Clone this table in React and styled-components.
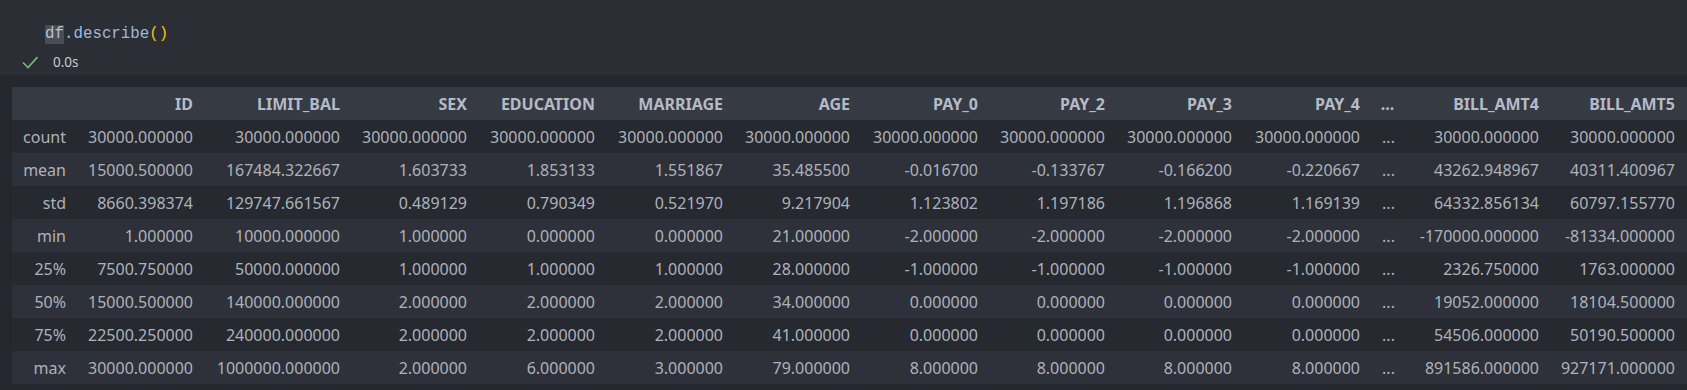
import React from "react";
import styled, { createGlobalStyle } from "styled-components";

const GlobalStyle = createGlobalStyle`
  html, body { margin: 0; padding: 0; background: #24272e; overflow: hidden; }
  body { font-family: "Noto Sans", "Open Sans", sans-serif; }
`;

const Page = styled.div`
  width: 1687px;
  height: 390px;
  background: #24272e;
  overflow: hidden;
`;

const InputCell = styled.div`
  height: 75px;
  background: #2b2e35;
  box-sizing: border-box;
  padding-top: 25px;
`;

const CodeLine = styled.div`
  padding-left: 45px;
  height: 19px;
  display: flex;
  align-items: center;
  font-family: "Liberation Mono", "DejaVu Sans Mono", monospace;
  font-size: 15.8px;
  white-space: pre;
`;

const Tok = styled.span`
  color: ${(p) => p.$c};
  background: ${(p) => p.$bg || "transparent"};
  line-height: 19px;
`;

const Status = styled.div`
  display: flex;
  align-items: center;
  height: 16px;
  margin-top: 10px;
  padding-left: 22px;
  gap: 15px;
  font-family: "Noto Sans", "Open Sans", sans-serif;
  font-size: 13.5px;
  color: #c8cbd1;
`;

const Output = styled.div`
  padding: 12px 0 0 12px;
  overflow: hidden;
`;

const Table = styled.table`
  border-collapse: collapse;
  table-layout: fixed;
  width: 1675px;
  font-family: "Noto Sans", "Open Sans", sans-serif;
  font-size: 16px;
`;

const HeadRow = styled.tr`
  background: #363a43;
  height: 33px;
`;

const Row = styled.tr`
  background: ${(p) => (p.$alt ? "#2e3139" : "#262930")};
  height: 33px;
`;

const Th = styled.th`
  padding: 0;
  padding-right: ${(p) => (p.$pr != null ? p.$pr : 10)}px;
  text-align: ${(p) => p.$align || "right"};
  font-weight: 700;
  color: #b5bac6;
  white-space: nowrap;
  overflow: hidden;
`;

const Td = styled.td`
  padding: 0;
  padding-right: ${(p) => (p.$pr != null ? p.$pr : 10)}px;
  text-align: right;
  color: #aeb2ba;
  white-space: nowrap;
  overflow: hidden;
`;

const Ellipsis = styled(Td)`
  text-align: center;
  padding-right: 0;
  padding-left: 2px;
`;

const columns = [
  "ID", "LIMIT_BAL", "SEX", "EDUCATION", "MARRIAGE", "AGE",
  "PAY_0", "PAY_2", "PAY_3", "PAY_4", "...", "BILL_AMT4", "BILL_AMT5",
];
const widths = [64, 127, 147, 127, 128, 128, 127, 128, 127, 127, 128, 35, 144, 138];

const rows = [
  ["count", "30000.000000", "30000.000000", "30000.000000", "30000.000000", "30000.000000", "30000.000000", "30000.000000", "30000.000000", "30000.000000", "30000.000000", "...", "30000.000000", "30000.000000"],
  ["mean", "15000.500000", "167484.322667", "1.603733", "1.853133", "1.551867", "35.485500", "-0.016700", "-0.133767", "-0.166200", "-0.220667", "...", "43262.948967", "40311.400967"],
  ["std", "8660.398374", "129747.661567", "0.489129", "0.790349", "0.521970", "9.217904", "1.123802", "1.197186", "1.196868", "1.169139", "...", "64332.856134", "60797.155770"],
  ["min", "1.000000", "10000.000000", "1.000000", "0.000000", "0.000000", "21.000000", "-2.000000", "-2.000000", "-2.000000", "-2.000000", "...", "-170000.000000", "-81334.000000"],
  ["25%", "7500.750000", "50000.000000", "1.000000", "1.000000", "1.000000", "28.000000", "-1.000000", "-1.000000", "-1.000000", "-1.000000", "...", "2326.750000", "1763.000000"],
  ["50%", "15000.500000", "140000.000000", "2.000000", "2.000000", "2.000000", "34.000000", "0.000000", "0.000000", "0.000000", "0.000000", "...", "19052.000000", "18104.500000"],
  ["75%", "22500.250000", "240000.000000", "2.000000", "2.000000", "2.000000", "41.000000", "0.000000", "0.000000", "0.000000", "0.000000", "...", "54506.000000", "50190.500000"],
  ["max", "30000.000000", "1000000.000000", "2.000000", "6.000000", "3.000000", "79.000000", "8.000000", "8.000000", "8.000000", "8.000000", "...", "891586.000000", "927171.000000"],
];

const lastIdx = columns.length - 1;

const CheckIcon = () => (
  <svg width="16" height="13" viewBox="0 0 16 13" style={{ display: "block" }}>
    <polyline
      points="1,6.5 6,11.5 15.5,1"
      fill="none"
      stroke="#6fbf7e"
      strokeWidth="1.6"
    />
  </svg>
);

export default function App() {
  return (
    <Page>
      <GlobalStyle />
      <InputCell>
        <CodeLine>
          <Tok $c="#b9c2d0" $bg="#4a4d55">df</Tok>
          <Tok $c="#9fb9dc">.describe</Tok>
          <Tok $c="#f2c21b">()</Tok>
        </CodeLine>
        <Status>
          <CheckIcon />
          <span>0.0s</span>
        </Status>
      </InputCell>
      <Output>
        <Table>
          <colgroup>
            {widths.map((w, i) => (
              <col key={i} style={{ width: w }} />
            ))}
          </colgroup>
          <thead>
            <HeadRow>
              <Th />
              {columns.map((c, j) =>
                c === "..." ? (
                  <Th key={c} $pr={0} $align="center">...</Th>
                ) : (
                  <Th key={c} $pr={j === lastIdx ? 12 : 10}>{c}</Th>
                )
              )}
            </HeadRow>
          </thead>
          <tbody>
            {rows.map((r, i) => (
              <Row key={r[0]} $alt={i % 2 === 1}>
                <Td>{r[0]}</Td>
                {r.slice(1).map((v, j) =>
                  v === "..." ? (
                    <Ellipsis key={j}>...</Ellipsis>
                  ) : (
                    <Td key={j} $pr={j === lastIdx ? 12 : 10}>{v}</Td>
                  )
                )}
              </Row>
            ))}
          </tbody>
        </Table>
      </Output>
    </Page>
  );
}
